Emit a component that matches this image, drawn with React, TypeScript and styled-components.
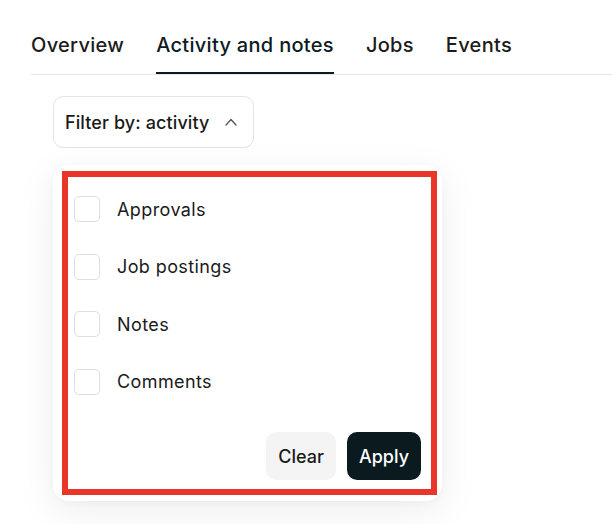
import React from "react";
import styled, { createGlobalStyle } from "styled-components";

const Global = createGlobalStyle`
  html, body { margin: 0; padding: 0; background: #ffffff; }
  body { font-family: Inter, "Noto Sans", sans-serif; color: #161a1b; -webkit-font-smoothing: antialiased; }
  * { box-sizing: border-box; }
`;

const Page = styled.div`
  width: 612px;
  height: 524px;
  overflow: hidden;
  padding-top: 31px;
`;

const TabBar = styled.div`
  display: flex;
  gap: 32px;
  margin-left: 31px;
  border-bottom: 1px solid #e6e6e6;
`;

const Tab = styled.div<{ $active?: boolean }>`
  font-size: 20px;
  line-height: 28px;
  font-weight: 500;
  letter-spacing: 0.3px;
  color: ${(p) => (p.$active ? "#0c1b1f" : "#1b1b1b")};
  padding-bottom: 13px;
  border-bottom: 2px solid ${(p) => (p.$active ? "#0c1b1f" : "transparent")};
`;

const Content = styled.div`
  padding-left: 53px;
  padding-top: 21px;
  display: flex;
  flex-direction: column;
  align-items: flex-start;
  gap: 17px;
`;

const FilterButton = styled.button`
  display: flex;
  align-items: center;
  gap: 15px;
  height: 52px;
  width: 201px;
  padding: 0 16px 0 11px;
  border: 1px solid #e4e4e4;
  border-radius: 10px;
  background: #fff;
  font-family: inherit;
  font-size: 18px;
  font-weight: 500;
  letter-spacing: 0.1px;
  color: #1a1a1a;
  cursor: pointer;
  white-space: nowrap;
`;

const Panel = styled.div`
  width: 389px;
  height: 336px;
  background: #fff;
  border-radius: 16px;
  box-shadow: 0 10px 40px rgba(0, 0, 0, 0.07), 0 2px 10px rgba(0, 0, 0, 0.03);
  padding: 6px 5px 6px 9px;
  display: flex;
`;

const Highlight = styled.div`
  flex: 1;
  border: 6px solid #e9352a;
  padding: 19px 10px 9px 6px;
  display: flex;
  flex-direction: column;
`;

const OptionList = styled.div`
  display: flex;
  flex-direction: column;
  gap: 31.5px;
`;

const Option = styled.label`
  display: flex;
  align-items: center;
  gap: 17px;
  height: 26px;
  font-size: 18px;
  font-weight: 400;
  letter-spacing: 0.4px;
  color: #1a1a1a;
  cursor: pointer;
`;

const Box = styled.span`
  width: 26px;
  height: 26px;
  border: 1px solid #dedede;
  border-radius: 5px;
  background: #fff;
  flex: none;
`;

const Actions = styled.div`
  margin-top: auto;
  display: flex;
  justify-content: flex-end;
  gap: 11px;
`;

const ActionButton = styled.button<{ $primary?: boolean }>`
  height: 48px;
  padding: 0 12px;
  border: none;
  border-radius: 10px;
  font-family: inherit;
  font-size: 18px;
  font-weight: 500;
  background: ${(p) => (p.$primary ? "#0b1a1e" : "#f4f4f4")};
  color: ${(p) => (p.$primary ? "#ffffff" : "#1a1a1a")};
  cursor: pointer;
`;

const options = ["Approvals", "Job postings", "Notes", "Comments"];

export default function App() {
  return (
    <Page>
      <Global />
      <TabBar>
        <Tab>Overview</Tab>
        <Tab $active>Activity and notes</Tab>
        <Tab>Jobs</Tab>
        <Tab>Events</Tab>
      </TabBar>
      <Content>
        <FilterButton>
          <span>Filter by: activity</span>
          <svg width="12" height="8" viewBox="0 0 12 8" fill="none">
            <path d="M1 7L6 1.5L11 7" stroke="#555" strokeWidth="1.3" strokeLinecap="round" strokeLinejoin="round" />
          </svg>
        </FilterButton>
        <Panel>
          <Highlight>
            <OptionList>
              {options.map((o) => (
                <Option key={o}>
                  <Box />
                  {o}
                </Option>
              ))}
            </OptionList>
            <Actions>
              <ActionButton>Clear</ActionButton>
              <ActionButton $primary>Apply</ActionButton>
            </Actions>
          </Highlight>
        </Panel>
      </Content>
    </Page>
  );
}
